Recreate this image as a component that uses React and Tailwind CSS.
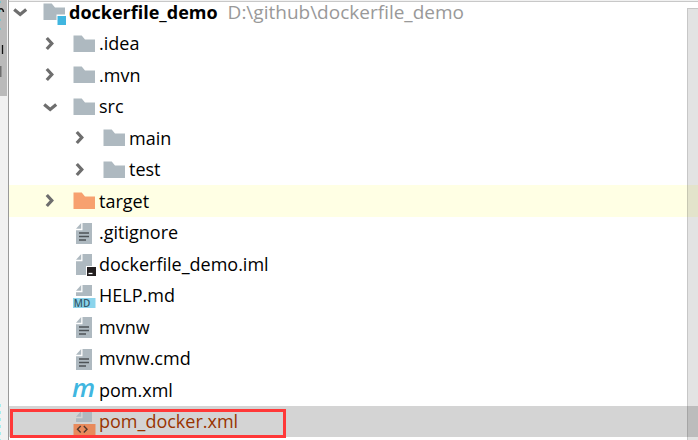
import clsx from "clsx";

const FILES = [
  { name: ".idea", depth: 1, icon: "folder", open: false },
  { name: ".mvn", depth: 1, icon: "folder", open: false },
  { name: "src", depth: 1, icon: "folder", open: true },
  { name: "main", depth: 2, icon: "folder", open: false },
  { name: "test", depth: 2, icon: "folder", open: false },
  { name: "target", depth: 1, icon: "excluded", open: false },
  { name: ".gitignore", depth: 1, icon: "text" },
  { name: "dockerfile_demo.iml", depth: 1, icon: "module" },
  { name: "HELP.md", depth: 1, icon: "markdown" },
  { name: "mvnw", depth: 1, icon: "text" },
  { name: "mvnw.cmd", depth: 1, icon: "text" },
  { name: "pom.xml", depth: 1, icon: "maven" },
  { name: "pom_docker.xml", depth: 1, icon: "xml", selected: true },
];

function Folder({ color = "#aeb9c0" }) {
  return <path d="M0.5 3.5h8.2l3.3 4h10v12.5h-21.5z" fill={color} />;
}

function Page() {
  return (
    <>
      <path d="M8.2 2v5.8H3z" fill="#aeb9c0" />
      <path d="M9.5 2H19v21H3V9.2h6.5z" fill="#aeb9c0" />
    </>
  );
}

function HalfPage() {
  return (
    <>
      <path d="M8.2 1v5.8H3z" fill="#aeb9c0" />
      <path d="M9.5 1H19v11H3V8.2h6.5z" fill="#aeb9c0" />
    </>
  );
}

function FileIcon({ type }) {
  return (
    <svg
      viewBox="0 0 24 24"
      className="size-6 shrink-0 overflow-visible"
      aria-hidden="true"
    >
      {type === "folder" && <Folder />}
      {type === "excluded" && <Folder color="#f7a16f" />}
      {type === "project" && (
        <>
          <path d="M0.5 3.5h8.2l3.3 4h10v7h-8.5v5.5h-13z" fill="#aeb9c0" />
          <path d="M14.5 16h8.5v9h-8.5z" fill="#40b6e0" />
        </>
      )}
      {type === "text" && (
        <>
          <Page />
          <path d="M6 12h10M6 15.5h10M6 19h7" stroke="#4d5357" strokeWidth="1.7" />
        </>
      )}
      {type === "module" && (
        <>
          <path d="M8.2 2v5.8H3z" fill="#aeb9c0" />
          <path d="M9.5 2H19v12h-6v9H3V9.2h6.5z" fill="#aeb9c0" />
          <path d="M14 15h9v9h-9z" fill="#231f20" />
          <path d="M15.5 21.5h4" stroke="#fff" strokeWidth="1.3" />
        </>
      )}
      {type === "markdown" && (
        <>
          <HalfPage />
          <path d="M0 14h22.5v10H0z" fill="#8bd4ec" />
          <text
            x="9"
            y="23"
            textAnchor="middle"
            className="fill-[#35596a] font-['Open_Sans',sans-serif] text-[10px] font-semibold"
          >
            MD
          </text>
        </>
      )}
      {type === "maven" && (
        <text
          x="-1"
          y="19"
          className="fill-[#40b6e0] font-['Open_Sans',sans-serif] text-[26px] font-semibold italic"
        >
          m
        </text>
      )}
      {type === "xml" && (
        <>
          <HalfPage />
          <path d="M0.5 14h22v11h-22z" fill="#e88a5c" />
          <path
            d="M7.7 16l-3.2 3.2l3.2 3.2M10.8 16l3.2 3.2l-3.2 3.2"
            fill="none"
            stroke="#51382e"
            strokeWidth="1.4"
          />
        </>
      )}
    </svg>
  );
}

function Toggle({ open, label }) {
  return (
    <button
      type="button"
      aria-expanded={open}
      aria-label={label}
      className="mr-4 size-3.5 shrink-0"
    >
      <svg
        viewBox="0 0 14 14"
        className="size-3.5 overflow-visible"
        aria-hidden="true"
      >
        <path
          d={open ? "M1.200 4.500l6 5l6-5" : "M3.800 1l5 5.500l-5 5.500"}
          fill="none"
          stroke="#6e6e6e"
          strokeWidth="3.200"
        />
      </svg>
    </button>
  );
}

function TreeRow({ file }) {
  const { name, depth, icon, open, selected } = file;
  return (
    <li
      role="treeitem"
      aria-selected={!!selected}
      className={clsx(
        "relative flex items-center odd:h-[31px] even:h-8",
        depth === 2 ? "pl-16" : "pl-[34px]",
        icon === "excluded" && "bg-[#ffffe4]",
        selected && "bg-[#d4d4d4] text-[#993300]"
      )}
    >
      {open === undefined ? (
        <span className="mr-4 w-3.5 shrink-0" />
      ) : (
        <Toggle open={open} label={name} />
      )}
      <FileIcon type={icon} />
      <span className="ml-0.5 pb-px">{name}</span>
      {selected && (
        <span className="absolute top-[3px] -bottom-px left-px w-[276px] border-3 border-[#ff3838]" />
      )}
    </li>
  );
}

// Edge of the tool window bar, with the clipped "Project" tab
function ToolStrip() {
  return (
    <div className="flex w-2 shrink-0 flex-col justify-between overflow-hidden bg-[#f1f1f1]">
      <svg viewBox="0 0 8 96" className="h-24 w-2" aria-hidden="true">
        <path d="M0 0h7v96h-7z" fill="#bababa" />
        <path d="M0 9q3-1 3.500 3" fill="none" stroke="#111" strokeWidth="1.5" />
        <path d="M2.500 45v9" stroke="#111" strokeWidth="1.3" />
        <path d="M0 66h1.500v11h-1.500z" fill="#6e6e6e" />
        <path d="M0.500 1v36" stroke="#7cc5cc" strokeDasharray="2 7" />
      </svg>
      <svg viewBox="0 0 8 38" className="h-[38px] w-2" aria-hidden="true">
        <path d="M0.500 2v36" stroke="#a5eef0" strokeDasharray="3 4" />
      </svg>
    </div>
  );
}

export default function App() {
  return (
    <div className="flex min-h-screen bg-[#f1f1f1] font-['Open_Sans','Noto_Sans',sans-serif] text-lg leading-6 text-black">
      <ToolStrip />
      <main className="relative min-w-0 flex-1 border-l border-[#999999] pt-px">
        <div className="min-h-[439px] border-t border-[#c8c8c8] bg-white whitespace-nowrap">
          <div className="flex h-[26px] items-center pb-1.5 pl-1">
            <Toggle open label="dockerfile_demo" />
            <FileIcon type="project" />
            <span className="ml-0.5 font-bold">dockerfile_demo</span>
            <span className="ml-2.5 text-[19px] text-[#999999]">
              D:\github\dockerfile_demo
            </span>
          </div>
          <ul role="tree" aria-label="Project files">
            {FILES.map((file) => (
              <TreeRow key={file.name} file={file} />
            ))}
          </ul>
        </div>
        <div className="absolute top-2 right-0 bottom-0 w-[11px] border-t border-l border-black/12 bg-black/11" />
      </main>
    </div>
  );
}
